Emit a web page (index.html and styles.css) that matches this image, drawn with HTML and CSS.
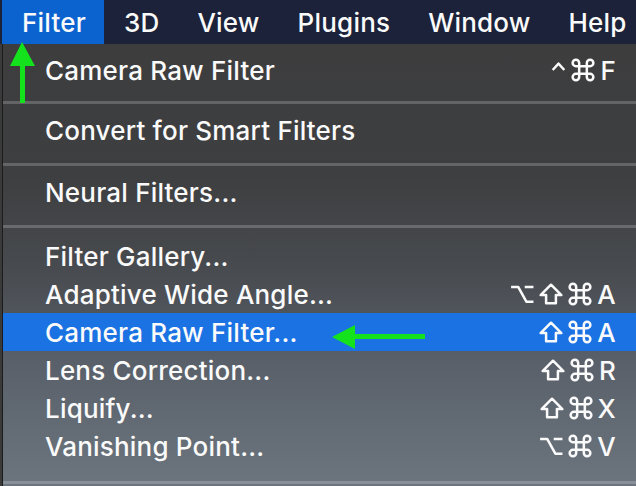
FILE: index.html
```html
<!DOCTYPE html>
<html>
<head>
<meta charset="utf-8">
<link rel="stylesheet" href="styles.css">
</head>
<body>
<div class="screen">
  <div class="menubar">
    <span class="mb-item active">Filter</span>
    <span class="mb-item">3D</span>
    <span class="mb-item">View</span>
    <span class="mb-item">Plugins</span>
    <span class="mb-item">Window</span>
    <span class="mb-item">Help</span>
  </div>
  <div class="menu">
    <div class="section s1">
      <div class="row"><span>Camera Raw Filter</span><span class="sc">
        <svg class="ic caret" viewBox="0 0 16 20"><path d="M2.5,10 L8,4 L13.5,10"/></svg>
        <svg class="ic" viewBox="0 0 22 20"><path d="M7.5,16.5 V3.5 A3,3 0 1 0 4.5,6.5 H17.5 A3,3 0 1 0 14.5,3.5 V16.5 A3,3 0 1 0 17.5,13.5 H4.5 A3,3 0 1 0 7.5,16.5 Z"/></svg>
        <span class="key">F</span></span></div>
    </div>
    <div class="sep"></div>
    <div class="section">
      <div class="row"><span>Convert for Smart Filters</span></div>
    </div>
    <div class="sep"></div>
    <div class="section">
      <div class="row"><span>Neural Filters...</span></div>
    </div>
    <div class="sep"></div>
    <div class="section s4">
      <div class="row"><span>Filter Gallery...</span></div>
      <div class="row"><span>Adaptive Wide Angle...</span><span class="sc">
        <svg class="ic" viewBox="0 0 22 20"><path d="M1,3.5 H7.5 L15,17 H21.5 M13.5,3.5 H21.5"/></svg>
        <svg class="ic" viewBox="0 0 22 20"><path d="M11,1.5 L20.5,11 H15.5 V18.5 H6.5 V11 H1.5 Z"/></svg>
        <svg class="ic" viewBox="0 0 22 20"><path d="M7.5,16.5 V3.5 A3,3 0 1 0 4.5,6.5 H17.5 A3,3 0 1 0 14.5,3.5 V16.5 A3,3 0 1 0 17.5,13.5 H4.5 A3,3 0 1 0 7.5,16.5 Z"/></svg>
        <span class="key">A</span></span></div>
      <div class="row hl"><span>Camera Raw Filter...</span><span class="sc">
        <svg class="ic" viewBox="0 0 22 20"><path d="M11,1.5 L20.5,11 H15.5 V18.5 H6.5 V11 H1.5 Z"/></svg>
        <svg class="ic" viewBox="0 0 22 20"><path d="M7.5,16.5 V3.5 A3,3 0 1 0 4.5,6.5 H17.5 A3,3 0 1 0 14.5,3.5 V16.5 A3,3 0 1 0 17.5,13.5 H4.5 A3,3 0 1 0 7.5,16.5 Z"/></svg>
        <span class="key">A</span></span></div>
      <div class="row"><span>Lens Correction...</span><span class="sc">
        <svg class="ic" viewBox="0 0 22 20"><path d="M11,1.5 L20.5,11 H15.5 V18.5 H6.5 V11 H1.5 Z"/></svg>
        <svg class="ic" viewBox="0 0 22 20"><path d="M7.5,16.5 V3.5 A3,3 0 1 0 4.5,6.5 H17.5 A3,3 0 1 0 14.5,3.5 V16.5 A3,3 0 1 0 17.5,13.5 H4.5 A3,3 0 1 0 7.5,16.5 Z"/></svg>
        <span class="key">R</span></span></div>
      <div class="row"><span>Liquify...</span><span class="sc">
        <svg class="ic" viewBox="0 0 22 20"><path d="M11,1.5 L20.5,11 H15.5 V18.5 H6.5 V11 H1.5 Z"/></svg>
        <svg class="ic" viewBox="0 0 22 20"><path d="M7.5,16.5 V3.5 A3,3 0 1 0 4.5,6.5 H17.5 A3,3 0 1 0 14.5,3.5 V16.5 A3,3 0 1 0 17.5,13.5 H4.5 A3,3 0 1 0 7.5,16.5 Z"/></svg>
        <span class="key">X</span></span></div>
      <div class="row"><span>Vanishing Point...</span><span class="sc">
        <svg class="ic" viewBox="0 0 22 20"><path d="M1,3.5 H7.5 L15,17 H21.5 M13.5,3.5 H21.5"/></svg>
        <svg class="ic" viewBox="0 0 22 20"><path d="M7.5,16.5 V3.5 A3,3 0 1 0 4.5,6.5 H17.5 A3,3 0 1 0 14.5,3.5 V16.5 A3,3 0 1 0 17.5,13.5 H4.5 A3,3 0 1 0 7.5,16.5 Z"/></svg>
        <span class="key">V</span></span></div>
    </div>
    <div class="sep"></div>
  </div>
  <svg class="annot" width="636" height="486" viewBox="0 0 636 486">
    <polygon points="22,42 35,66 10,66" fill="#14e21c"/>
    <rect x="20" y="64" width="5" height="39" fill="#14e21c"/>
    <polygon points="332,337 355,325 355,349" fill="#14e21c"/>
    <rect x="353" y="334" width="72" height="5" fill="#14e21c"/>
  </svg>
</div>
</body>
</html>
```
FILE: styles.css
```css
* { box-sizing: border-box; }
html, body { margin: 0; padding: 0; }
body {
  width: 636px;
  height: 486px;
  overflow: hidden;
  background: #3a3a3b;
  font-family: "Inter", "Liberation Sans", sans-serif;
  font-weight: 500;
  letter-spacing: 0.2px;
  color: #fafafa;
}
.screen {
  position: relative;
  width: 636px;
  height: 486px;
}
.menubar {
  height: 44px;
  background: #1b2239;
  display: flex;
  align-items: stretch;
  padding-left: 2px;
  font-size: 26px;
}
.mb-item {
  display: flex;
  align-items: center;
  padding: 0 18px 0 20px;
}
.mb-item.active { background: #0b63d0; }
.menu {
  height: 442px;
  margin-left: 2px;
  border-left: 1px solid #1c1c1c;
  background: linear-gradient(180deg, #3d3d3e 0%, #3e3f41 30%, #474a4e 50%, #59606a 72%, #6c757e 100%);
  font-size: 26px;
}
.section { padding: 7px 0 14px; }
.section.s1 { padding-bottom: 12px; }
.section.s4 { padding: 9px 0 16px; }
.sep { height: 3px; background: rgba(255,255,255,0.2); }
.row {
  height: 38px;
  display: flex;
  align-items: center;
  justify-content: space-between;
  padding: 0 20px 0 42px;
  white-space: nowrap;
}
.row.hl { background: #1b72e3; }
.sc { display: flex; align-items: center; }
.ic {
  width: 24px;
  height: 22px;
  margin-right: 5px;
  fill: none;
  stroke: #fafafa;
  stroke-width: 2.3;
  stroke-linejoin: round;
  overflow: visible;
}
.ic.caret { width: 17px; margin-right: 4px; }
.key { display: inline-block; margin-left: 0; }
.annot {
  position: absolute;
  left: 0;
  top: 0;
  pointer-events: none;
}
```
